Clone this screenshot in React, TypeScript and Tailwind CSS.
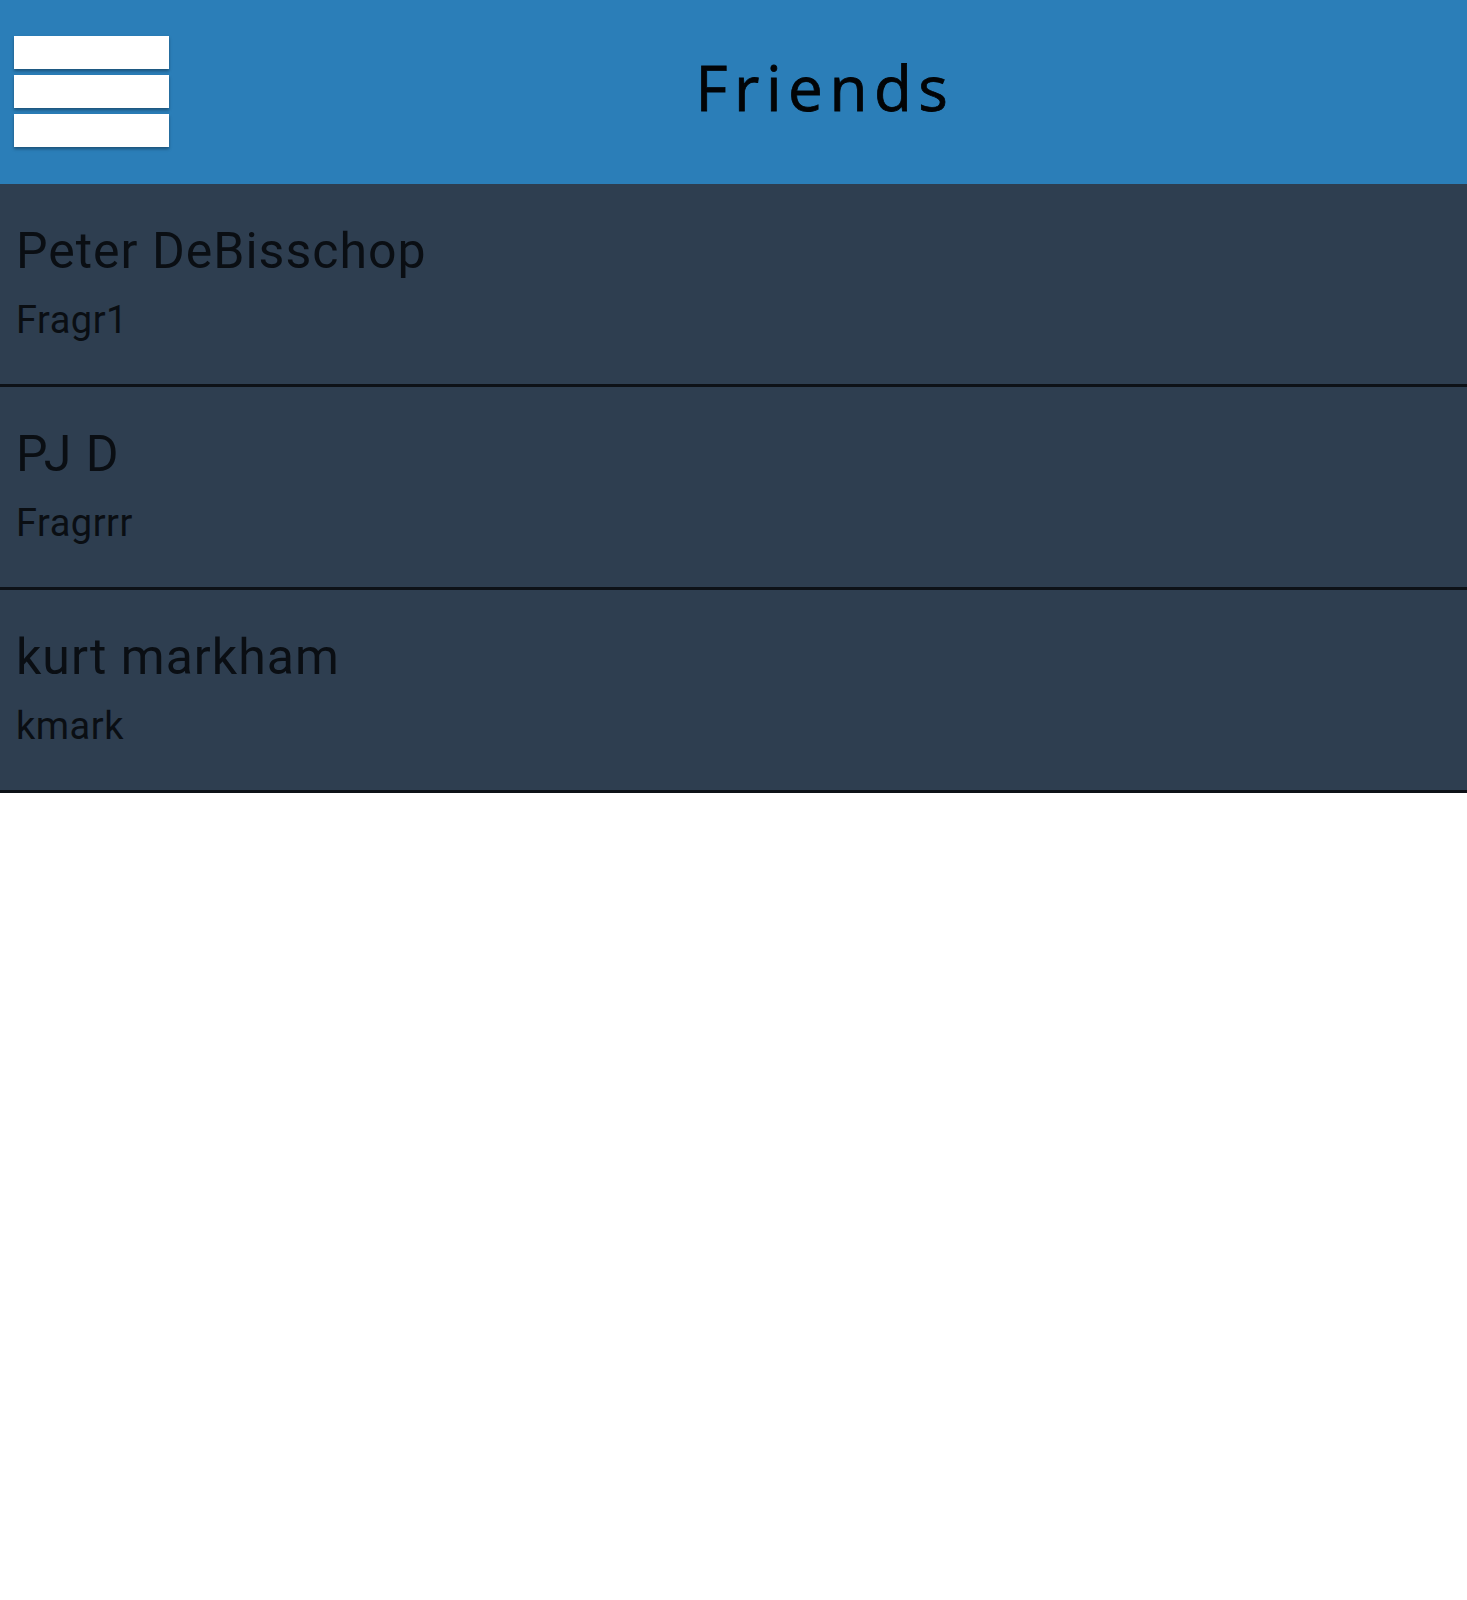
const friends = [
  { name: "Peter DeBisschop", handle: "Fragr1" },
  { name: "PJ D", handle: "Fragrrr" },
  { name: "kurt markham", handle: "kmark" },
];

function MenuButton() {
  return (
    <button type="button" className="flex w-[155px] flex-col gap-[6px] ml-[14px]">
      <span className="block h-[33px] w-full bg-white shadow-[0_2px_3px_rgba(0,0,0,0.35)]" />
      <span className="block h-[33px] w-full bg-white shadow-[0_2px_3px_rgba(0,0,0,0.35)]" />
      <span className="block h-[33px] w-full bg-white shadow-[0_2px_3px_rgba(0,0,0,0.35)]" />
    </button>
  );
}

export default function App() {
  return (
    <div className="min-h-[1600px] w-full bg-white">
      <header className="flex h-[184px] items-start bg-[#2b7eb8]">
        <div className="w-[183px] pt-[36px]">
          <MenuButton />
        </div>
        <h1
          className="flex-1 pt-[47px] text-center text-[62px] leading-[80px] tracking-[6.5px] text-[#020406] [-webkit-text-stroke:0.8px_#020406]"
          style={{ fontFamily: '"Open Sans", sans-serif' }}
        >
          Friends
        </h1>
      </header>
      <ul style={{ fontFamily: "Roboto, sans-serif" }}>
        {friends.map((f) => (
          <li
            key={f.handle}
            className="h-[203px] border-b-[3px] border-[#0d1117] bg-[#2e3e50] pl-[16px] pt-[37px] text-[#0a0e13]"
          >
            <div className="text-[50px] leading-[60px] tracking-[1px]">{f.name}</div>
            <div className="mt-[16px] text-[38px] leading-[46px] tracking-[0.5px]">{f.handle}</div>
          </li>
        ))}
      </ul>
    </div>
  );
}
